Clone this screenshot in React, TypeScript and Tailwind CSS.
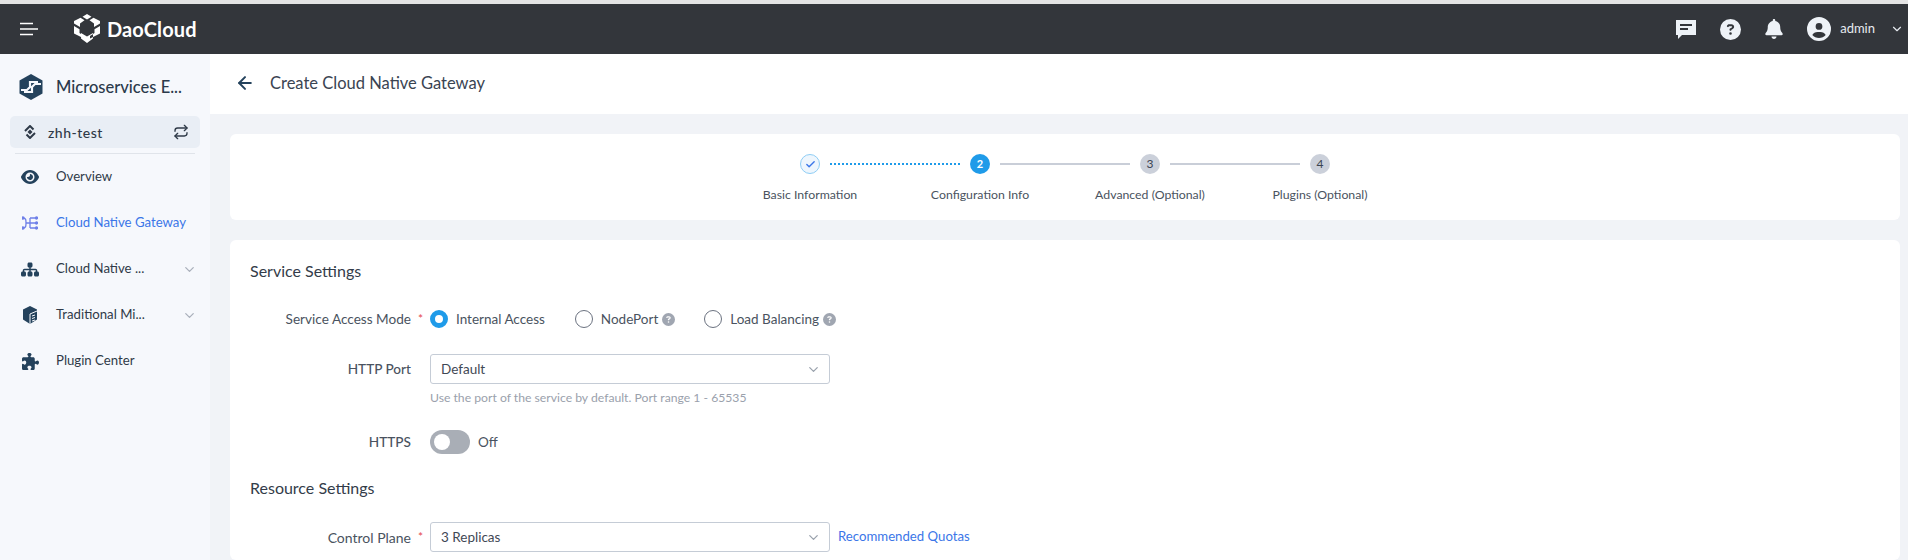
import { ArrowLeft, Check, ChevronDown, Repeat } from "lucide-react";
import { FaBell, FaCircleQuestion, FaCircleUser, FaEye, FaPuzzlePiece, FaSitemap } from "react-icons/fa6";

const font = { fontFamily: '"Lato", "Noto Sans", sans-serif' };

function NavItem({ icon, label, active, chevron }: { icon: React.ReactNode; label: string; active?: boolean; chevron?: boolean }) {
  return (
    <div className={`flex h-[46px] items-center pl-[21px] pr-[13px] text-[13.2px] ${active ? "text-[#3b76e8]" : "text-[#2f3a48]"}`}>
      <span className="flex w-[18px] justify-center">{icon}</span>
      <span className="ml-[17px] flex-1 whitespace-nowrap">{label}</span>
      {chevron && <ChevronDown size={15} className="text-[#a9b0bb]" />}
    </div>
  );
}

function Step({ n, label, state }: { n: string; label: string; state: "done" | "active" | "todo" }) {
  return (
    <div className="relative flex w-[170px] flex-col items-center">
      {state === "done" && (
        <span className="flex h-5 w-5 items-center justify-center rounded-full border border-[#8ecdf5] bg-[#eef6fd] text-[#3b76e8]">
          <Check size={11} strokeWidth={3} />
        </span>
      )}
      {state === "active" && <span className="flex h-5 w-5 items-center justify-center rounded-full bg-[#1f9be9] text-[11px] font-bold text-white">{n}</span>}
      {state === "todo" && <span className="flex h-5 w-5 items-center justify-center rounded-full bg-[#cbd0da] text-[12px] text-[#3a4452]">{n}</span>}
      <span className="mt-[13px] whitespace-nowrap text-[12.3px] leading-[16px] text-[#4a5360]">{label}</span>
    </div>
  );
}

function Radio({ on, label, help }: { on?: boolean; label: string; help?: boolean }) {
  return (
    <div className="flex items-center">
      {on ? (
        <span className="h-[18px] w-[18px] rounded-full border-[5px] border-[#1f9be9] bg-white" />
      ) : (
        <span className="h-[18px] w-[18px] rounded-full border border-[#6b7280] bg-white" />
      )}
      <span className="ml-[8px] text-[13.5px] text-[#4a5360]">{label}</span>
      {help && <FaCircleQuestion size={13} className="ml-[4px] text-[#a0a6b1]" />}
    </div>
  );
}

function Select({ value }: { value: string }) {
  return (
    <div className="flex h-[30px] w-[400px] items-center justify-between rounded-[3px] border border-[#c5ccd6] bg-white pl-[10px] pr-[8px] text-[13.5px] text-[#3f4855]">
      <span>{value}</span>
      <ChevronDown size={15} className="text-[#9aa2ad]" />
    </div>
  );
}

export default function App() {
  return (
    <div style={font} className="h-[560px] w-[1908px] overflow-hidden bg-[#f1f3f7]">
      <div className="h-[4px] bg-[#e4e4e4]" />
      <header className="flex h-[50px] items-center bg-[#33363b] text-white">
        <svg width="18" height="14" viewBox="0 0 18 14" className="ml-[20px]" fill="none" stroke="#fff" strokeWidth="1.6">
          <path d="M0 1.5h13M0 7h18M0 12.500h13" />
        </svg>
        <svg width="28" height="30" viewBox="0 0 28 30" className="ml-[35px]" fill="#fff">
          <path d="M14 0l4.500 2.700L14 5.400 9.500 2.700zM7.500 3.800l4 2.500-4.500 3.200V13L1 9.500V7zM20.500 3.800l-4 2.500 4.500 3.200V13l6-3.500V7zM1 12l5.500 3.300V19L11 22v2.500L1 19.500zM27 12l-5.500 3.300V19L17 22v2.500l10-5zM8 19l6 3.500 6-3.500v5.500L14 29l-6-4.500z" />
        </svg>
        <span className="ml-[6px] text-[20px] font-bold tracking-[0.1px]">DaoCloud</span>
        <div className="flex-1" />
        <svg width="22" height="22" viewBox="0 0 22 22" className="mr-[23px]">
          <path fill="#eef2f7" d="M1 2h20v15H7l-4 4v-4H1z" />
          <path stroke="#33363b" strokeWidth="2" d="M5 7h12M5 11h8" />
        </svg>
        <FaCircleQuestion size={21} className="mr-[23px] text-[#eef2f7]" />
        <FaBell size={20} className="mr-[23px] text-[#eef2f7]" />
        <FaCircleUser size={24} className="text-[#eef2f7]" />
        <span className="ml-[9px] text-[13px] text-[#e6eaf0]">admin</span>
        <ChevronDown size={14} className="ml-[15px] mr-[4px] text-[#e6eaf0]" />
      </header>
      <div className="flex h-[506px]">
        <aside className="w-[210px] shrink-0 bg-[#f6f8fc]">
          <div className="flex h-[62px] items-center pl-[18px] pr-[10px] pt-[4px] text-[16.5px] text-[#2b3a4b]">
            <svg width="26" height="26" viewBox="0 0 26 26" className="shrink-0">
              <path fill="#24425c" d="M13 0l11.500 6.500v13L13 26 1.500 19.500v-13z" />
              <path fill="none" stroke="#f6f8fc" strokeWidth="2.200" d="M3 16h6l3-3V8h8M23 10h-6l-3 3v5H6" />
            </svg>
            <span className="ml-[12px] whitespace-nowrap font-medium">Microservices E...</span>
          </div>
          <div className="mx-[10px] flex h-[32px] items-center rounded-[5px] bg-[#e9eef5] pl-[13px] pr-[11px] text-[14px] font-medium tracking-[0.5px] text-[#2f3a48]">
            <svg width="14" height="14" viewBox="0 0 14 14" fill="none" stroke="#2f3a48" strokeWidth="2">
              <path d="M2 6l5-5 3.500 3.500M12 8l-5 5-3.500-3.500" />
              <path fill="#2f3a48" stroke="none" d="M7 4.500L9.500 7 7 9.500 4.500 7z" />
            </svg>
            <span className="ml-[11px] flex-1">zhh-test</span>
            <Repeat size={16} />
          </div>
          <div className="mx-[15px] mt-[5px] h-px bg-[#e0e4ea]" />
          <div>
            <NavItem icon={<FaEye size={18} className="text-[#24425c]" />} label="Overview" />
            <NavItem
              active
              icon={
                <svg width="16" height="16" viewBox="0 0 16 16" fill="none" stroke="#6e7fe8" strokeWidth="1.300">
                  <path d="M1 3c3 0 3 2 3 5s0 5-3 5M4 8h9M8 3h5M8 13h5M8 3v10" />
                  <circle cx="1" cy="3" r="1" fill="#6e7fe8" />
                  <circle cx="1" cy="13" r="1" fill="#6e7fe8" />
                  <circle cx="14.500" cy="3" r="1" fill="#6e7fe8" />
                  <circle cx="14.500" cy="8" r="1" fill="#6e7fe8" />
                  <circle cx="14.500" cy="13" r="1" fill="#6e7fe8" />
                </svg>
              }
              label="Cloud Native Gateway"
            />
            <NavItem icon={<FaSitemap size={19} className="text-[#24425c]" />} label="Cloud Native ..." chevron />
            <NavItem
              icon={
                <svg width="16" height="18" viewBox="0 0 16 18">
                  <path fill="#24425c" d="M8 0l7 3.500v10L8 18l-7-4.500v-10z" />
                  <path fill="none" stroke="#f6f8fc" strokeWidth="1" d="M8 8l7-3M8 8v10M10 10l3-1M10 12.500l3-1M10 15l3-1" />
                </svg>
              }
              label="Traditional Mi..."
              chevron
            />
            <NavItem icon={<FaPuzzlePiece size={17} className="text-[#24425c]" />} label="Plugin Center" />
          </div>
        </aside>
        <main className="min-w-0 flex-1">
          <div className="flex h-[60px] items-center bg-white pb-[2px] pl-[25px]">
            <ArrowLeft size={20} strokeWidth={2.400} className="text-[#24425c]" />
            <span className="ml-[15px] text-[16.5px] text-[#3a4452]">Create Cloud Native Gateway</span>
          </div>
          <div className="mx-[20px] mr-[8px] mt-[20px] flex h-[86px] justify-center rounded-[6px] bg-white pt-[20px]">
            <div className="relative flex">
              <Step n="1" label="Basic Information" state="done" />
              <Step n="2" label="Configuration Info" state="active" />
              <Step n="3" label="Advanced (Optional)" state="todo" />
              <Step n="4" label="Plugins (Optional)" state="todo" />
              <span className="absolute left-[105px] top-[9px] w-[130px] border-t-[2px] border-dotted border-[#1f9be9]" />
              <span className="absolute left-[275px] top-[9px] h-[2px] w-[130px] bg-[#c9ced8]" />
              <span className="absolute left-[445px] top-[9px] h-[2px] w-[130px] bg-[#c9ced8]" />
            </div>
          </div>
          <div className="mx-[20px] mr-[8px] mt-[20px] h-[320px] rounded-[6px] bg-white pl-[20px] pt-[19px]">
            <h2 className="text-[16px] leading-[24px] text-[#333c49]">Service Settings</h2>
            <div className="mt-[26px] flex h-[20px] items-center">
              <label className="w-[161px] text-right text-[13.6px] text-[#4a5360]">Service Access Mode</label>
              <span className="ml-[7px] w-[12px] text-[12px] text-[#e5484d]">*</span>
              <Radio on label="Internal Access" />
              <div className="ml-[30px]"><Radio label="NodePort" help /></div>
              <div className="ml-[29px]"><Radio label="Load Balancing" help /></div>
            </div>
            <div className="mt-[25px] flex items-center">
              <label className="w-[161px] text-right text-[13.6px] font-medium text-[#4a5360]">HTTP Port</label>
              <div className="ml-[19px]"><Select value="Default" /></div>
            </div>
            <p className="ml-[180px] mt-[6px] text-[12.2px] leading-[16px] text-[#9aa1ac]">Use the port of the service by default. Port range 1 - 65535</p>
            <div className="mt-[24px] flex items-center">
              <label className="w-[161px] text-right text-[13.6px] font-medium text-[#4a5360]">HTTPS</label>
              <span className="ml-[19px] flex h-[24px] w-[40px] items-center rounded-full bg-[#a9aeb6] pl-[4px]">
                <span className="h-[16px] w-[16px] rounded-full bg-white" />
              </span>
              <span className="ml-[8px] text-[13.5px] text-[#4a5360]">Off</span>
            </div>
            <h2 className="mt-[22px] text-[16px] leading-[24px] text-[#333c49]">Resource Settings</h2>
            <div className="mt-[22px] flex items-center">
              <label className="w-[161px] text-right text-[14px] text-[#4a5360]">Control Plane</label>
              <span className="ml-[7px] w-[12px] text-[12px] text-[#e5484d]">*</span>
              <Select value="3 Replicas" />
              <a className="ml-[8px] text-[13.2px] text-[#3b76e8]">Recommended Quotas</a>
            </div>
          </div>
        </main>
      </div>
    </div>
  );
}
